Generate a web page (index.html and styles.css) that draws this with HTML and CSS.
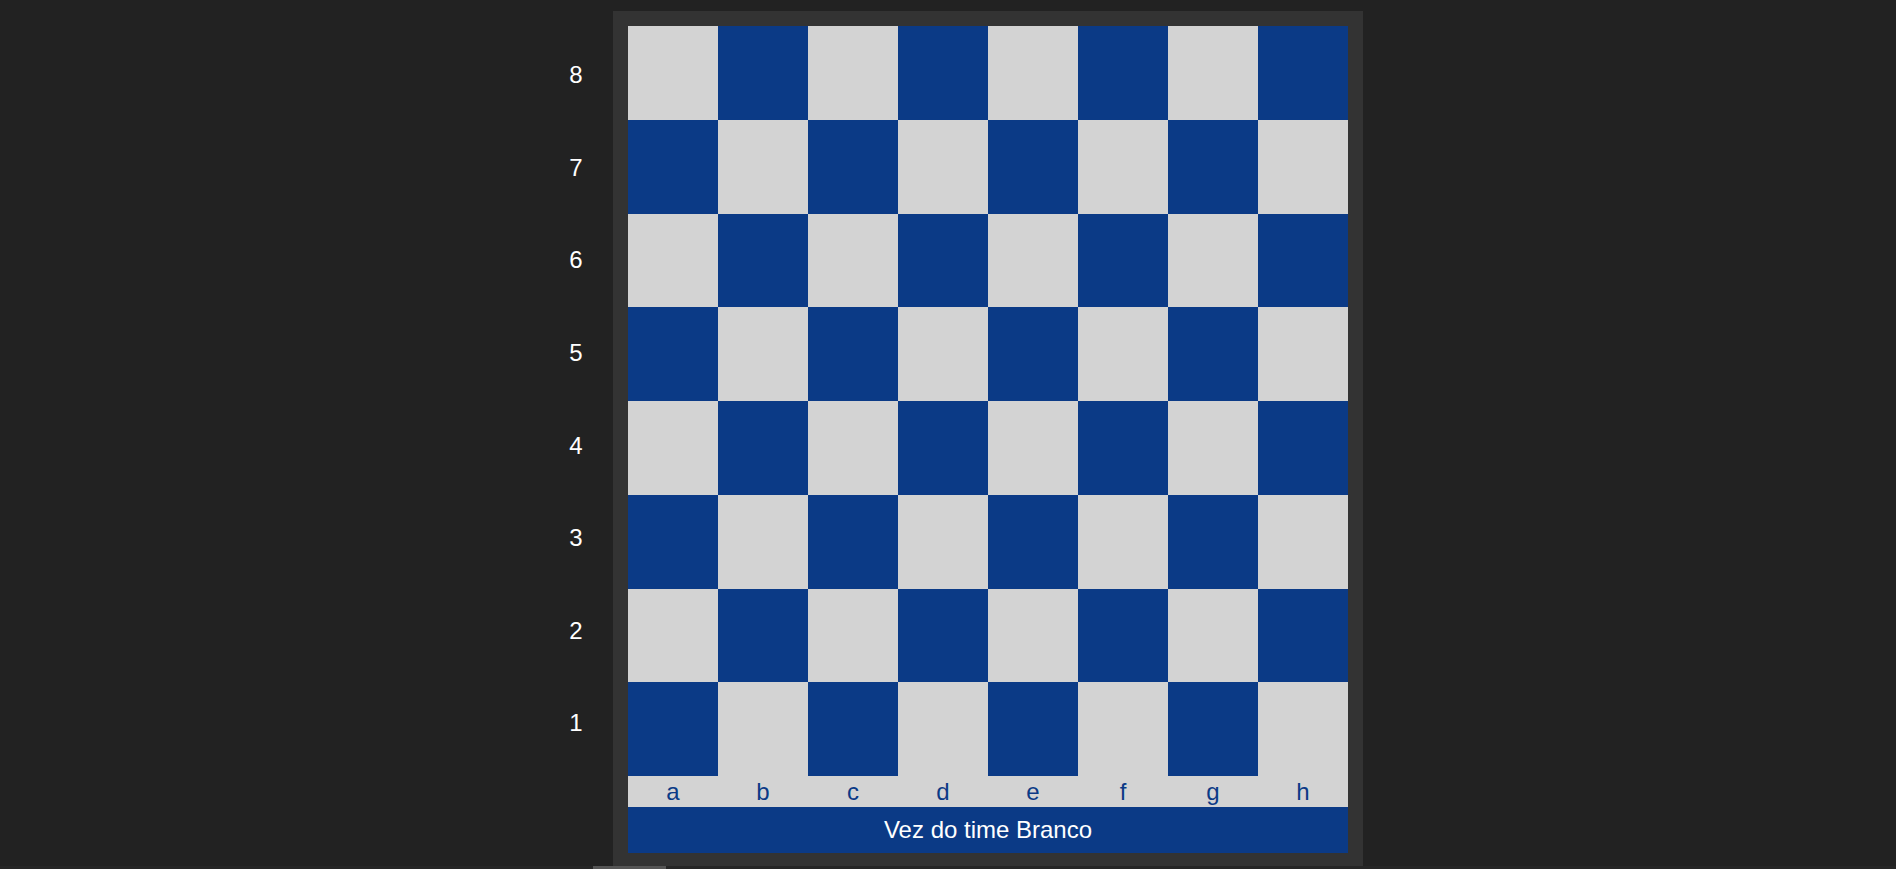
FILE: index.html
```html
<!DOCTYPE html>
<html lang="pt">
<head>
<meta charset="utf-8">
<title>Xadrez</title>
<link rel="stylesheet" href="styles.css">
</head>
<body>
<main class="game">
  <div class="ranks">
    <div class="rank">8</div>
    <div class="rank">7</div>
    <div class="rank">6</div>
    <div class="rank">5</div>
    <div class="rank">4</div>
    <div class="rank">3</div>
    <div class="rank">2</div>
    <div class="rank">1</div>
  </div>
  <section class="frame">
    <div class="board">
      <div class="sq light"></div><div class="sq dark"></div><div class="sq light"></div><div class="sq dark"></div><div class="sq light"></div><div class="sq dark"></div><div class="sq light"></div><div class="sq dark"></div>
      <div class="sq dark"></div><div class="sq light"></div><div class="sq dark"></div><div class="sq light"></div><div class="sq dark"></div><div class="sq light"></div><div class="sq dark"></div><div class="sq light"></div>
      <div class="sq light"></div><div class="sq dark"></div><div class="sq light"></div><div class="sq dark"></div><div class="sq light"></div><div class="sq dark"></div><div class="sq light"></div><div class="sq dark"></div>
      <div class="sq dark"></div><div class="sq light"></div><div class="sq dark"></div><div class="sq light"></div><div class="sq dark"></div><div class="sq light"></div><div class="sq dark"></div><div class="sq light"></div>
      <div class="sq light"></div><div class="sq dark"></div><div class="sq light"></div><div class="sq dark"></div><div class="sq light"></div><div class="sq dark"></div><div class="sq light"></div><div class="sq dark"></div>
      <div class="sq dark"></div><div class="sq light"></div><div class="sq dark"></div><div class="sq light"></div><div class="sq dark"></div><div class="sq light"></div><div class="sq dark"></div><div class="sq light"></div>
      <div class="sq light"></div><div class="sq dark"></div><div class="sq light"></div><div class="sq dark"></div><div class="sq light"></div><div class="sq dark"></div><div class="sq light"></div><div class="sq dark"></div>
      <div class="sq dark"></div><div class="sq light"></div><div class="sq dark"></div><div class="sq light"></div><div class="sq dark"></div><div class="sq light"></div><div class="sq dark"></div><div class="sq light"></div>
    </div>
    <div class="files">
      <span>a</span><span>b</span><span>c</span><span>d</span><span>e</span><span>f</span><span>g</span><span>h</span>
    </div>
    <div class="status">Vez do time Branco</div>
  </section>
</main>
<div class="hscroll"><div class="thumb"></div></div>
</body>
</html>
```
FILE: styles.css
```css
html, body {
  margin: 0;
  padding: 0;
  height: 100%;
  overflow: hidden;
}
body {
  background: #222222;
  font-family: "Liberation Sans", Arial, sans-serif;
  display: flex;
  flex-direction: column;
}
.game {
  display: flex;
  justify-content: center;
  padding-top: 11px;
}
.ranks {
  width: 74px;
  padding-left: 6px;
  padding-top: 18px;
  display: grid;
  grid-template-rows: repeat(8, 92.6px);
  align-content: start;
}
.rank {
  color: #ffffff;
  font-size: 24px;
  display: flex;
  align-items: center;
  justify-content: center;
}
.frame {
  background: #333333;
  width: 720px;
  padding: 15px 15px 13px;
  display: flex;
  flex-direction: column;
}
.board {
  display: grid;
  grid-template-columns: repeat(8, 90px);
  grid-template-rows: repeat(8, 93.75px);
}
.sq.light { background: #d3d3d3; }
.sq.dark { background: #0b3a86; }
.files {
  display: grid;
  grid-template-columns: repeat(8, 90px);
  height: 31px;
  background: #d3d3d3;
  color: #0b3a86;
  font-size: 24px;
}
.files span {
  display: flex;
  align-items: center;
  justify-content: center;
}
.status {
  height: 46px;
  background: #0b3a86;
  color: #ffffff;
  font-size: 24px;
  display: flex;
  align-items: center;
  justify-content: center;
}
.hscroll {
  height: 4px;
  background: #262626;
  display: flex;
}
.thumb {
  margin-left: 593px;
  width: 73px;
  background: #555555;
}
```
